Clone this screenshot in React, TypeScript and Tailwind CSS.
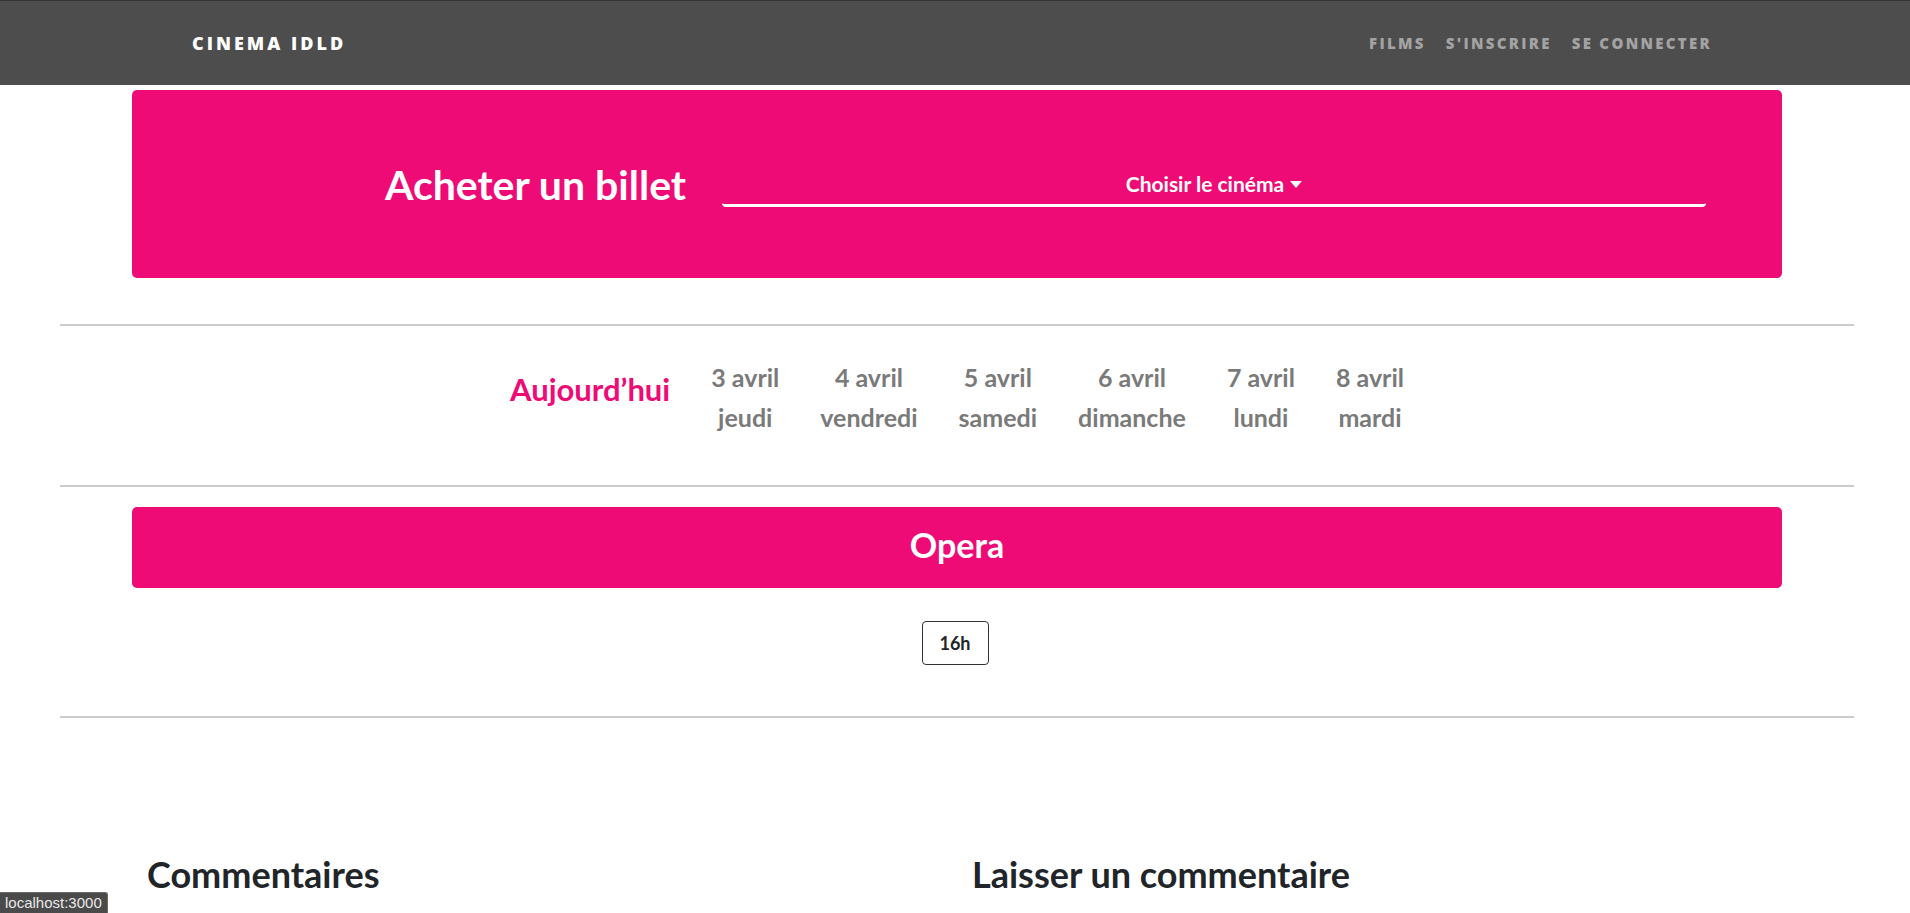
import React from "react";

const dates = [
  ["3 avril", "jeudi"],
  ["4 avril", "vendredi"],
  ["5 avril", "samedi"],
  ["6 avril", "dimanche"],
  ["7 avril", "lundi"],
  ["8 avril", "mardi"],
];

export default function App() {
  return (
    <div
      className="relative h-[913px] overflow-hidden bg-white"
      style={{ fontFamily: "Lato, 'Noto Sans', sans-serif" }}
    >
      {/* Navbar */}
      <div
        className="flex h-[85px] items-center justify-between border-t border-[#333333] bg-[#4d4d4d] pl-[192px] pr-[198px]"
        style={{ fontFamily: "'Open Sans', 'Noto Sans', sans-serif" }}
      >
        <div className="text-[18px] font-extrabold uppercase tracking-[3px] text-white">
          Cinema IDLD
        </div>
        <div className="flex gap-[20px] text-[15px] font-extrabold uppercase tracking-[2.3px] text-[#a3a3a3]">
          <span>Films</span>
          <span>S'inscrire</span>
          <span>Se connecter</span>
        </div>
      </div>

      {/* Hero */}
      <div className="ml-[132px] mr-[128px] mt-[5px] flex h-[188px] items-center rounded-[5px] bg-[#ee0b76] pl-[253px]">
        <div className="w-[301px] shrink-0 whitespace-nowrap text-[41px] font-bold leading-none text-white">
          Acheter un billet
        </div>
        <div className="ml-[36px] flex h-[46px] w-[984px] items-center justify-center rounded-[4px] border-b-[3px] border-white pt-[3px] text-[21px] font-bold text-white">
          <span>Choisir le cinéma</span>
          <svg className="ml-[6px] mt-[2px]" width="12" height="8" viewBox="0 0 12 8">
            <path d="M0 0 L12 0 L6 7 Z" fill="white" />
          </svg>
        </div>
      </div>

      {/* HR */}
      <div className="ml-[60px] mr-[56px] mt-[46px] h-[2px] bg-[#cccccc]" />

      {/* Dates */}
      <div className="flex justify-center gap-[41px] pb-[48px] pl-[4px] pt-[31px]">
        <div className="pt-[12px] text-[31px] font-bold leading-[40px] text-[#ee0b76]">
          Aujourd’hui
        </div>
        {dates.map(([d, w]) => (
          <div
            key={d}
            className="flex flex-col items-center text-[25px] font-bold leading-[40px] text-[#7a7a7a]"
          >
            <span>{d}</span>
            <span>{w}</span>
          </div>
        ))}
      </div>

      <div className="ml-[60px] mr-[56px] h-[2px] bg-[#cccccc]" />

      {/* Opera */}
      <div className="ml-[132px] mr-[128px] mt-[20px] flex h-[81px] items-center justify-center rounded-[5px] bg-[#ee0b76] pb-[6px] text-[34px] font-bold leading-none text-white">
        Opera
      </div>

      <div className="mt-[33px] flex justify-center">
        <div className="flex h-[44px] w-[67px] items-center justify-center rounded-[4px] border border-[#333333] text-[18px] font-bold text-[#212529]">
          16h
        </div>
      </div>

      <div className="ml-[60px] mr-[56px] mt-[51px] h-[2px] bg-[#cccccc]" />

      {/* Comments */}
      <div className="ml-[132px] mr-[128px] mt-[135px] grid grid-cols-2">
        <div className="px-[15px]">
          <h2 className="text-[36px] font-bold leading-[1.2] text-[#212529]">Commentaires</h2>
        </div>
        <div className="px-[15px]">
          <h2 className="text-[36px] font-bold leading-[1.2] text-[#212529]">
            Laisser un commentaire
          </h2>
        </div>
      </div>

      {/* Browser status bubble */}
      <div
        className="absolute bottom-0 left-0 flex h-[21px] items-center rounded-tr-[3px] border-r border-t border-[#6a6a6a] bg-[#4a4a4a] px-[5px] text-[15px] text-[#e8e8e8]"
        style={{ fontFamily: "'Liberation Sans', Arial, sans-serif" }}
      >
        localhost:3000
      </div>
    </div>
  );
}
